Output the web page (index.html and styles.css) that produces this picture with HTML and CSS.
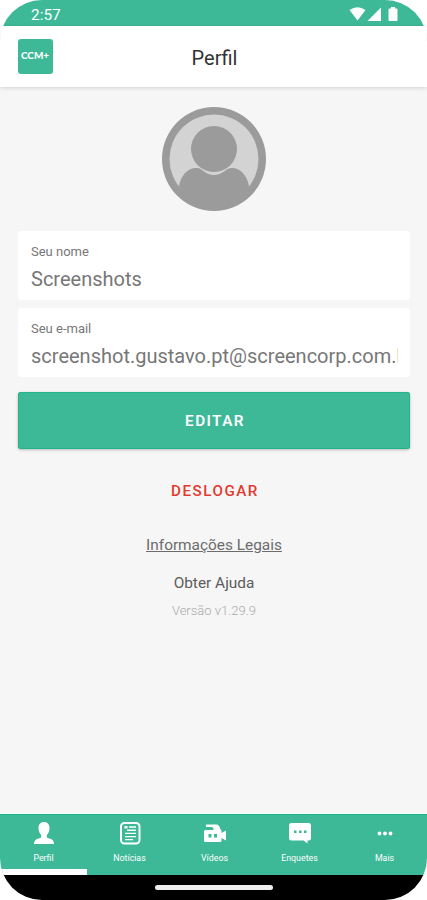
FILE: index.html
```html
<!DOCTYPE html>
<html lang="pt-BR">
<head>
    <meta charset="UTF-8">
    <meta name="viewport" content="width=device-width, initial-scale=1.0">
    <title>Perfil</title>
    <link rel="stylesheet" href="styles.css">
</head>
<body>
    <div class="phone">
        <div class="status-bar">
            <span class="time">2:57</span>
            <svg class="status-icons" width="50" height="16" viewBox="0 0 50 16">
                <path d="M.5 4Q8.500-1.500 16.500 4L8.500 14.500Z"/>
                <path d="M18.500 15L32 1.500V15Z"/>
                <path d="M39.500 3.500q0-1 1-1h1.500V1h4v1.500h1.500q1 0 1 1V14q0 1-1 1h-7q-1 0-1-1Z"/>
            </svg>
        </div>
        <header>
            <div class="logo"><span>CCM+</span></div>
            <h1>Perfil</h1>
        </header>
        <main>
            <svg class="avatar" width="104" height="104" viewBox="0 0 104 104">
                <circle cx="52" cy="52" r="52" fill="#9b9b9b"/>
                <circle cx="52" cy="52" r="44.500" fill="#d3d3d3"/>
                <path d="M17 79C19 68 26 60.500 35 61q3 0 5 2 12 10 24 0 2-2 6-2c8 0 15 7 17 18L84 92 52 102 20 92Z" fill="#9b9b9b"/>
                <circle cx="52" cy="42" r="23" fill="#9b9b9b"/>
            </svg>
            <form>
                <div class="field">
                    <label>Seu nome</label>
                    <div class="value">Screenshots</div>
                </div>
                <div class="field">
                    <label>Seu e-mail</label>
                    <div class="value">screenshot.gustavo.pt@screencorp.com.br</div>
                </div>
                <button type="button" class="edit">EDITAR</button>
            </form>
            <a class="logout">DESLOGAR</a>
            <a class="legal">Informações Legais</a>
            <a class="help">Obter Ajuda</a>
            <p class="version">Versão v1.29.9</p>
        </main>
        <nav>
            <a class="active">
                <svg width="24" height="24" viewBox="0 0 24 24">
                    <path d="M12 1C8.500 1 6.500 3.500 6.500 7c0 3 1 5.500 2.700 7v2.500L4 18.500Q2 19.500 2 23h20q0-3.500-2-4.500l-5.200-2V14c1.700-1.500 2.700-4 2.700-7 0-3.500-2-6-5.500-6Z"/>
                </svg>
                <span>Perfil</span>
            </a>
            <a>
                <svg width="24" height="24" viewBox="0 0 24 24">
                    <rect class="line" x="3" y="2" width="18.500" height="20.500" rx="3.500"/>
                    <path class="line thin" d="M11 6h7M9 9.200h9M7 12.400h11M7 15.600h11M7 18.600h8"/>
                    <path d="M6.500 5h3v2.500h-3Z"/>
                </svg>
                <span>Notícias</span>
            </a>
            <a>
                <svg width="24" height="24" viewBox="0 0 24 24">
                    <path d="M4 3.500h9q3.500 0 4.200 4.500 1.300.500 1.300 2v2l4.500-2.500v10L18.500 17v2.500q0 1.500-1.500 1.500H2.500Q1 21 1 19.500v-9Q1 9 2.500 9h8q0-3-2-3H4Q2.800 6 2.800 4.700T4 3.500Z"/>
                    <path class="green" d="M5.500 13h3v3.500h-3ZM11 13h3v3.500h-3Z"/>
                </svg>
                <span>Vídeos</span>
            </a>
            <a>
                <svg width="24" height="24" viewBox="0 0 24 24">
                    <path d="M3.500 2h17Q23 2 23 4.500V17q0 2.500-2.500 2.500h-1v3l-4-3h-12Q1 19.500 1 17V4.500Q1 2 3.500 2Z"/>
                    <path class="green" d="M6 9.500h2.500V12H6ZM11 9.500h2.500V12H11ZM16 9.500h2.500V12H16Z"/>
                </svg>
                <span>Enquetes</span>
            </a>
            <a>
                <svg width="24" height="24" viewBox="0 0 24 24">
                    <circle cx="6.500" cy="12.500" r="1.900"/>
                    <circle cx="12" cy="12.500" r="1.900"/>
                    <circle cx="17.500" cy="12.500" r="1.900"/>
                </svg>
                <span>Mais</span>
            </a>
        </nav>
        <div class="home-bar"><span></span></div>
    </div>
</body>
</html>
```

FILE: styles.css
```css
* {
    box-sizing: border-box;
}
body {
    margin: 0;
    background: #fff;
    font-family: Roboto, sans-serif;
}
.phone {
    display: flex;
    flex-direction: column;
    width: 427px;
    height: 900px;
    overflow: hidden;
    background: #f6f6f6;
    border-radius: 42px;
}
.status-bar {
    display: flex;
    justify-content: space-between;
    height: 26px;
    padding: 6px 28px 0 31px;
    background: #3db998;
    color: #fff;
}
.time {
    font-size: 15.4px;
    line-height: 18px;
}
.status-icons {
    fill: #fff;
}
header {
    display: grid;
    grid-template-columns: 35px 1fr 35px;
    align-items: center;
    height: 61px;
    padding: 0 18px;
    background: #fff;
    box-shadow: 0 1px 4px rgba(0, 0, 0, 0.15);
    z-index: 1;
}
.logo {
    display: flex;
    justify-content: center;
    height: 35px;
    border-radius: 3px;
    background: #3db998;
    color: #fff;
    font: 900 8.5px/35px Lato, sans-serif;
}
.logo span {
    transform: scaleX(1.17);
}
h1 {
    margin: 2px 0 0;
    padding-left: 2px;
    font-size: 20px;
    font-weight: 400;
    line-height: 24px;
    text-align: center;
    color: #333;
}
main {
    display: flex;
    flex-direction: column;
    align-items: center;
    flex: 1;
    padding: 20px 17px 0 18px;
}
form {
    width: 392px;
    margin-top: 20px;
}
.field {
    height: 69px;
    margin-bottom: 8px;
    padding: 13px 12px 0 13px;
    border-radius: 3px;
    background: #fff;
    color: #777;
}
.field label {
    display: block;
    font-size: 13px;
    line-height: 16px;
}
.value {
    margin-top: 7px;
    overflow: hidden;
    white-space: nowrap;
    font-size: 20px;
    line-height: 24px;
}
.edit {
    display: block;
    width: 100%;
    height: 57px;
    margin-top: 15px;
    padding: 1px 0 0 2px;
    border: 0;
    border-radius: 3px;
    background: #3db998;
    box-shadow: 0 1px 3px rgba(0, 0, 0, 0.25), inset 0 0 0 1px #25b38b;
    color: #fff;
    font: 600 15.3px/56px Roboto, sans-serif;
    letter-spacing: 1.4px;
}
.logout {
    margin-top: 32px;
    padding-left: 2px;
    color: #e23a2e;
    font-size: 15.2px;
    font-weight: 500;
    line-height: 20px;
    letter-spacing: 1.5px;
}
.legal {
    margin-top: 34px;
    color: #6c6c6c;
    font-size: 15.4px;
    line-height: 20px;
    text-decoration: underline;
}
.help {
    margin-top: 18px;
    color: #5c5c5c;
    font-size: 15.4px;
    line-height: 20px;
}
.version {
    margin: 9px 0 0;
    color: #aaa;
    font-size: 13px;
    font-weight: 300;
    line-height: 18px;
}
nav {
    display: grid;
    grid-template-columns: 87px repeat(4, 85px);
    height: 61px;
    background: #3db998;
    border-top: 1px solid #20b48a;
}
nav a {
    display: flex;
    flex-direction: column;
    align-items: center;
    padding-top: 6px;
    color: #fff;
    font-size: 8.8px;
    line-height: 12px;
}
nav svg {
    fill: #fff;
}
nav span {
    margin-top: 7px;
}
nav .active {
    border-bottom: 6px solid #fff;
}
nav .line {
    fill: none;
    stroke: #fff;
    stroke-width: 2;
}
nav .thin {
    stroke-width: 1.4;
}
nav .green {
    fill: #3db998;
}
.home-bar {
    display: flex;
    justify-content: center;
    height: 25px;
    padding-top: 10px;
    background: #000;
}
.home-bar span {
    width: 118px;
    height: 5px;
    border-radius: 3px;
    background: #eee;
}
```
